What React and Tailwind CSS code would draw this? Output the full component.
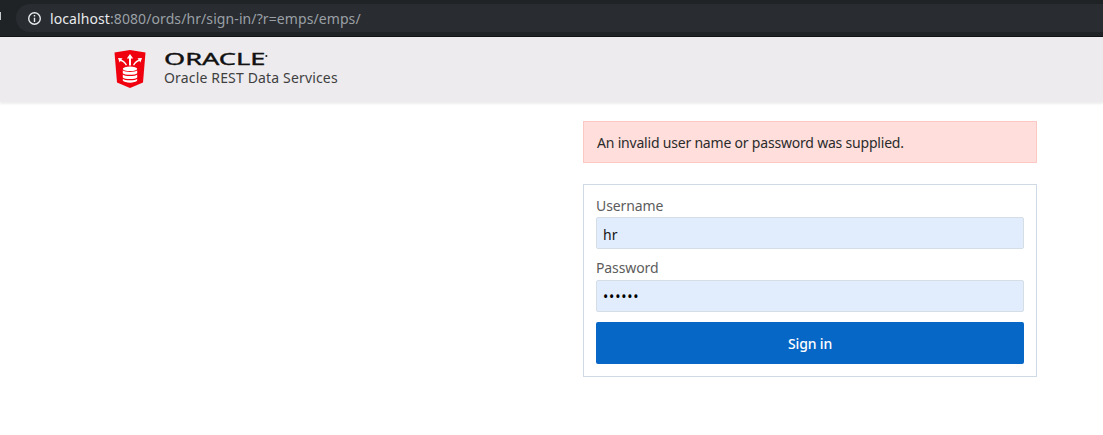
import React from "react";

const RestLogo = () => (
  <svg width="32" height="38" viewBox="0 0 32 38">
    <path d="M0.5 2.5 L16 0 L31.5 2.5 L29 32.5 L16 38 L3 32.5 Z" fill="#f0000e" />
    <path d="M16 4 L12.8 8.4 H15 V15.5 H17 V8.4 H19.2 Z" fill="#fff" />
    <path d="M4 8 L8.5 8.2 L7.4 9.8 C9.8 10.6 12 12.4 13 15 L11.8 15.5 C10.8 13.4 8.8 11.8 6.6 11 L5.6 12.5 Z" fill="#fff" />
    <path d="M28 8 L23.5 8.2 L24.6 9.8 C22.2 10.6 20 12.4 19 15 L20.2 15.5 C21.2 13.4 23.2 11.8 25.4 11 L26.4 12.5 Z" fill="#fff" />
    <ellipse cx="16" cy="18.8" rx="7.2" ry="2.3" fill="#fff" />
    <path d="M8.8 20.3 C10.5 22.5 21.5 22.5 23.2 20.3 V23.2 C21.5 25.4 10.5 25.4 8.8 23.2 Z" fill="#fff" />
    <path d="M8.8 24.6 C10.5 26.6 21.5 26.6 23.2 24.6 V27.4 C21.5 29.4 10.5 29.4 8.8 27.4 Z" fill="#fff" />
    <path d="M8.8 28.7 C10.5 30.7 21.5 30.7 23.2 28.7 V30.6 C21.5 33.4 10.5 33.4 8.8 30.6 Z" fill="#fff" />
  </svg>
);

const Field = ({ label, value, type }) => (
  <div>
    <label
      className={
        type === "password"
          ? "block h-[20px] leading-[18px] text-sm tracking-[-0.1px] text-[#5c5c5c] mb-[1px]"
          : "block h-[20px] leading-[20px] text-sm tracking-[-0.1px] text-[#5c5c5c] mb-[1px]"
      }
    >
      {label}
    </label>
    <input
      readOnly
      type={type}
      value={value}
      className={
        type === "password"
          ? "block w-full h-[32px] px-[6px] pt-[1px] text-sm tracking-[0.8px] text-black bg-[#e1ecfd] border border-[#d5dde6] rounded-[2px] outline-none"
          : "block w-full h-[32px] px-[6px] pt-[2px] text-sm text-[#161513] bg-[#e1ecfd] border border-[#d5dde6] rounded-[2px] outline-none"
      }
    />
  </div>
);

export default function App() {
  return (
    <div className="h-[435px] w-[1103px] overflow-hidden bg-white font-['Inter',sans-serif]">
      {/* Browser bar */}
      <div className="h-[37px] bg-[#202326] pt-[4px] border-b border-[#111315] flex">
        <div className="w-[1px] h-[8px] mt-[8px] mr-[15px] bg-[#c8c8c8]" />
        <div className="h-[28px] flex-1 rounded-l-full bg-[#292c30] flex items-center pl-[11px] gap-[8px]">
          <svg width="15" height="15" viewBox="0 0 15 15" fill="none" stroke="#e8eaed" strokeWidth="1.4">
            <circle cx="7.5" cy="7.5" r="5.8" />
            <path d="M7.5 6.8 V11 M7.5 4 V5.4" />
          </svg>
          <div className="text-[14px] tracking-[0.09px] text-[#9aa0a6]">
            <span className="text-[#e8eaed]">localhost</span>:8080/ords/hr/sign-in/?r=emps/emps/
          </div>
        </div>
      </div>

      {/* Header */}
      <div className="h-[65px] bg-[#edebee] shadow-[0_2px_2px_rgba(0,0,0,0.07)] pl-[114px] pt-[13px] flex gap-[18px]">
        <RestLogo />
        <div className="pt-[2px]">
          <div className="flex items-start h-[15px] w-fit origin-left scale-x-[1.75]">
            <span className="leading-[15px] text-[15.5px] text-[#111] [-webkit-text-stroke:0.35px_#111] font-['Liberation_Sans',sans-serif]">
              ORACLE
            </span>
            <span className="w-[1px] h-[2px] mt-[3px] bg-[#333]" />
          </div>
          <div className="text-[14px] tracking-[0.16px] leading-[16px] text-[#3f3f3f] mt-[3px]">Oracle REST Data Services</div>
        </div>
      </div>

      {/* Sign in column */}
      <div className="w-[454px] ml-[583px] mt-[19px] flex flex-col gap-[21px]">
        <div className="h-[42px] bg-[#ffdedb] border border-[#fbc8c4] px-[13px] pt-[1px] flex items-center text-sm tracking-[-0.2px] text-[#2b2b2b]">
          An invalid user name or password was supplied.
        </div>
        <div className="h-[193px] border border-[#cfdae5] px-[12px] pt-[11px] flex flex-col gap-[10px]">
          <Field label="Username" value="hr" type="text" />
          <Field label="Password" value="secret" type="password" />
          <button className="h-[42px] w-full pt-[1px] rounded-[2px] bg-[#0767c6] text-sm font-medium tracking-[-0.15px] text-white">
            Sign in
          </button>
        </div>
      </div>
    </div>
  );
}
